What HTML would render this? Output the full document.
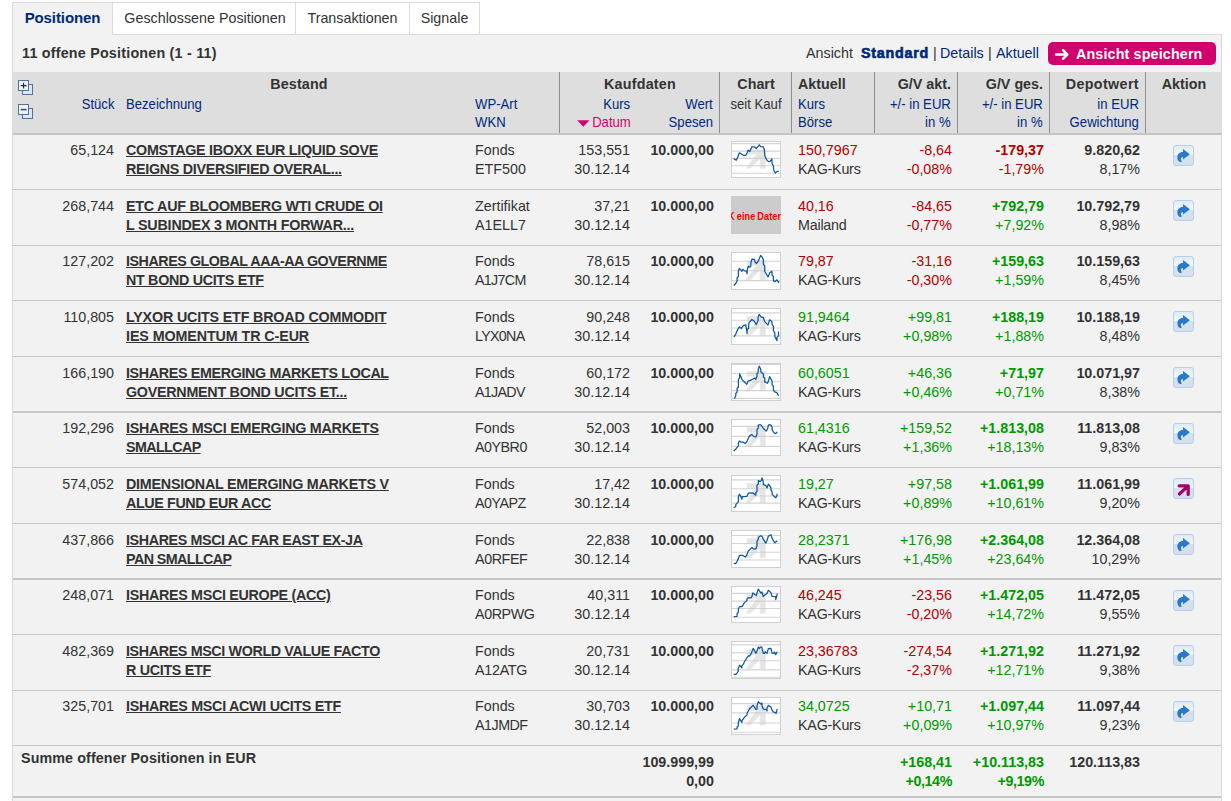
<!DOCTYPE html>
<html lang="de"><head><meta charset="utf-8"><title>Depot</title>
<style>
html,body{margin:0;padding:0;background:#fff;}
body{width:1231px;height:801px;position:relative;overflow:hidden;font-family:"Liberation Sans",Arial,sans-serif;font-size:14.3px;color:#333;}
.panel{position:absolute;left:12px;top:34px;width:1208px;height:800px;border:1px solid #dbdbdb;background:#f2f2f2;}
.tab{position:absolute;top:2px;height:31px;border:1px solid #dbdbdb;background:#fff;box-sizing:content-box;font-size:14.3px;line-height:31px;text-align:center;color:#333;white-space:nowrap;}
.tab.act{font-size:15px;letter-spacing:-0.1px;background:#f2f2f2;border-bottom:none;height:32px;line-height:29px;color:#00287a;font-weight:bold;z-index:2;}
.hd{position:absolute;left:13px;top:72px;width:1209px;height:61px;background:#dedede;border-bottom:2px solid #c4c4c6;}
.vs{position:absolute;top:72px;width:1px;height:61px;background:#8e8e8e;}
.t{position:absolute;line-height:19px;height:19px;white-space:nowrap;}
.b{font-weight:bold;}
.h{font-size:14.2px;transform:scaleX(0.925);transform-origin:0 50%;}
.h.ra{transform-origin:100% 50%;}
.h.ca{transform-origin:50% 50%;}
.std{letter-spacing:0.75px;-webkit-text-stroke:0.6px #00287a;}
.r{color:#b30000;}
.g{color:#009900;}
.l{color:#00287a;}
.m{color:#d6006e;}
a.nm{letter-spacing:-0.28px;font-weight:bold;color:#333;text-decoration:underline;}
.sep{position:absolute;left:13px;width:1208px;background:#c6c6c8;}
.ic,.ch{position:absolute;}
.kd{position:absolute;width:50px;height:38px;background:#ccc;overflow:hidden;}
.kd span{position:absolute;left:-2.6px;top:13px;line-height:14px;font-family:"Liberation Sans",sans-serif;font-weight:bold;font-size:11.5px;color:#f00;white-space:nowrap;transform:scaleX(0.80);transform-origin:0 0;letter-spacing:0.1px;word-spacing:-1px;}
.btn{box-shadow:0 0 0 1px rgba(255,255,255,0.5);position:absolute;left:1048px;top:42px;width:168px;height:23px;border-radius:5px;background:#d2006e;color:#fff;font-weight:bold;font-size:14.3px;letter-spacing:0.15px;line-height:23px;white-space:nowrap;}
.kd span::first-letter{letter-spacing:2.6px;}
</style></head>
<body>
<div class="panel"></div>
<div class="tab act" style="left:12px;width:99px">Positionen</div>
<div class="tab" style="left:112px;width:182px;text-indent:2px">Geschlossene Positionen</div>
<div class="tab" style="left:295px;width:113px">Transaktionen</div>
<div class="tab" style="left:409px;width:69px">Signale</div>
<div class="t b" style="left:22px;top:44px;letter-spacing:0.22px">11 offene Positionen (1 - 11)</div>
<div class="t" style="left:806px;top:44px">Ansicht</div>
<div class="t b l std" style="left:861px;top:44px">Standard</div>
<div class="t" style="left:933px;top:44px">|</div>
<div class="t l" style="left:940px;top:44px">Details</div>
<div class="t" style="left:988px;top:44px">|</div>
<div class="t l" style="left:996px;top:44px">Aktuell</div>
<div class="btn"><svg style="position:absolute;left:6px;top:6px" width="16" height="13" viewBox="0 0 16 13"><path d="M2 6.5 L13 6.5 M9 2.2 L13.3 6.5 L9 10.8" fill="none" stroke="#fff" stroke-width="2.5" stroke-linecap="round" stroke-linejoin="round"/></svg><span style="position:absolute;left:28px;top:1px">Ansicht speichern</span></div>
<div class="hd"></div>
<div class="vs" style="left:559px"></div><div class="vs" style="left:719px"></div><div class="vs" style="left:791px"></div><div class="vs" style="left:874px"></div><div class="vs" style="left:957px"></div><div class="vs" style="left:1049px"></div><div class="vs" style="left:1145px"></div>
<svg class="ic" style="left:18px;top:80px" width="16" height="16" viewBox="0 0 16 16"><rect x="4.5" y="4.5" width="10" height="10" fill="#dbe7f6" stroke="#53729a"/><rect x="0.5" y="0.5" width="10" height="10" fill="#eef4fc" stroke="#53729a"/><path d="M2.7 5.6 H8.5 M5.6 2.7 V8.5" stroke="#222" stroke-width="1.1" fill="none"/></svg>
<svg class="ic" style="left:18px;top:104px" width="16" height="16" viewBox="0 0 16 16"><rect x="4.5" y="4.5" width="10" height="10" fill="#dbe7f6" stroke="#53729a"/><rect x="0.5" y="0.5" width="10" height="10" fill="#eef4fc" stroke="#53729a"/><path d="M2.7 5.6 H8.5" stroke="#444" stroke-width="1.5" fill="none"/></svg>
<div class="t b" style="left:199px;width:200px;text-align:center;top:75px;letter-spacing:0.15px">Bestand</div>
<div class="t h ra l" style="right:1117px;top:95px">Stück</div>
<div class="t h l" style="left:126px;top:95px">Bezeichnung</div>
<div class="t h l" style="left:475px;top:95px">WP-Art</div>
<div class="t h l" style="left:475px;top:113px">WKN</div>
<div class="t b" style="left:540px;width:200px;text-align:center;top:75px;letter-spacing:0.22px">Kaufdaten</div>
<div class="t h ra l" style="right:601px;top:95px">Kurs</div>
<div class="t h ra m" style="right:600px;top:113px">Datum</div>
<svg class="ic" style="left:577px;top:120px" width="13" height="7" viewBox="0 0 13 7"><path d="M0.2 0.3 H12.4 L6.3 6.8 Z" fill="#d6006e"/></svg>
<div class="t h ra l" style="right:518px;top:95px">Wert</div>
<div class="t h ra l" style="right:518px;top:113px">Spesen</div>
<div class="t b" style="left:656px;width:200px;text-align:center;top:75px">Chart</div>
<div class="t h ca" style="left:656px;width:200px;text-align:center;top:95px">seit Kauf</div>
<div class="t b" style="left:798px;top:75px">Aktuell</div>
<div class="t h l" style="left:798px;top:95px">Kurs</div>
<div class="t h l" style="left:798px;top:113px">Börse</div>
<div class="t b" style="right:280px;top:75px">G/V akt.</div>
<div class="t h ra l" style="right:280px;top:95px">+/- in EUR</div>
<div class="t h ra l" style="right:280px;top:113px">in %</div>
<div class="t b" style="right:188px;top:75px">G/V ges.</div>
<div class="t h ra l" style="right:188px;top:95px">+/- in EUR</div>
<div class="t h ra l" style="right:188px;top:113px">in %</div>
<div class="t b" style="right:92px;top:75px;letter-spacing:0.38px">Depotwert</div>
<div class="t h ra l" style="right:92px;top:95px">in EUR</div>
<div class="t h ra l" style="right:92px;top:113px">Gewichtung</div>
<div class="t b" style="left:1084px;width:200px;text-align:center;top:75px">Aktion</div>
<!-- row 1 -->
<div class="t " style="top:141px;right:1117px;text-align:right;">65,124</div><div class="t " style="top:141px;left:126px;"><a class="nm" style="letter-spacing:-0.279px">COMSTAGE IBOXX EUR LIQUID SOVE</a></div><div class="t " style="top:160px;left:126px;"><a class="nm" style="letter-spacing:-0.294px">REIGNS DIVERSIFIED OVERAL...</a></div><div class="t " style="top:141px;left:475px;">Fonds</div><div class="t " style="top:160px;left:475px;"><span style="letter-spacing:0px">ETF500</span></div><div class="t " style="top:141px;right:601px;text-align:right;">153,551</div><div class="t " style="top:160px;right:601px;text-align:right;">30.12.14</div><div class="t b" style="top:141px;right:517px;text-align:right;">10.000,00</div><svg class="ch" style="left:731px;top:141px" width="50" height="37" viewBox="0 0 50 37" preserveAspectRatio="none"><rect x="0.5" y="0.5" width="49" height="36" fill="#fff" stroke="#d0d0d0"/><g fill="#e5e5e5" stroke="#ededed" stroke-width="0.8" stroke-linejoin="round"><path d="M16 8.2 H34.4 V27.2 H29 V17.6 L19.6 27.2 H14.9 L25.6 13.2 H16 Z"/></g><g stroke="#cdcdcd" stroke-opacity="0.85" stroke-width="1.1"><line x1="1" x2="49" y1="2.6" y2="2.6"/><line x1="1" x2="49" y1="10.1" y2="10.1"/><line x1="1" x2="49" y1="17.4" y2="17.4"/><line x1="1" x2="49" y1="24.8" y2="24.8"/><line x1="1" x2="49" y1="32.2" y2="32.2"/></g><polyline transform="translate(0.7,0.5)" points="2.0,17.1 4.6,18.7 6.1,15.6 7.7,11.3 9.7,12.5 11.8,13.8 14.1,13.8 15.4,11.5 16.4,8.7 18.2,10.0 19.2,7.4 20.2,5.4 22.8,5.4 24.6,6.9 26.4,4.9 27.6,3.3 28.9,5.1 31.7,5.4 32.8,9.0 33.0,13.6 34.0,16.6 35.6,19.2 37.1,20.2 38.6,19.7 40.2,17.4 40.4,22.3 41.7,24.3 42.0,28.4 43.5,31.5 45.3,29.9 47.1,29.9" fill="none" stroke="#0f57a3" stroke-width="1.25" stroke-linejoin="round" stroke-linecap="butt"/></svg><div class="t r" style="top:141px;left:798px;">150,7967</div><div class="t " style="top:160px;left:798px;"><span style="letter-spacing:-0.22px">KAG-Kurs</span></div><div class="t r" style="top:141px;right:279px;text-align:right;">-8,64</div><div class="t r" style="top:160px;right:279px;text-align:right;">-0,08%</div><div class="t r b" style="top:141px;right:187px;text-align:right;">-179,37</div><div class="t r" style="top:160px;right:187px;text-align:right;">-1,79%</div><div class="t b" style="top:141px;right:91px;text-align:right;">9.820,62</div><div class="t " style="top:160px;right:91px;text-align:right;">8,17%</div><svg class="ic" style="left:1173px;top:145px" width="21" height="21" viewBox="0 0 21 21"><defs><linearGradient id="gb145" x1="0" y1="0" x2="0" y2="1"><stop offset="0" stop-color="#dfe9f6"/><stop offset="0.45" stop-color="#f1f6fb"/><stop offset="0.46" stop-color="#d8e2ee"/><stop offset="1" stop-color="#d5e0ec"/></linearGradient></defs><rect x="0.5" y="0.5" width="20" height="20" rx="2.5" fill="url(#gb145)" stroke="#b5cfee"/><path d="M16.9 9.3 L10 4 L10 7.1 C6.2 7.1 4.2 9.6 4.3 12.6 C4.4 15 5.6 16.7 7.2 17.1 C8.4 17.3 9 16.5 8.4 15.6 C7.7 14.5 7.7 13.6 8.2 13 C8.7 12.3 9.2 12.1 10 12.1 L10 14.6 Z" fill="#2878cc"/></svg>
<!-- row 2 -->
<div class="t " style="top:197px;right:1117px;text-align:right;">268,744</div><div class="t " style="top:197px;left:126px;"><a class="nm" style="letter-spacing:-0.24px">ETC AUF BLOOMBERG WTI CRUDE OI</a></div><div class="t " style="top:216px;left:126px;"><a class="nm" style="letter-spacing:-0.204px">L SUBINDEX 3 MONTH FORWAR...</a></div><div class="t " style="top:197px;left:475px;">Zertifikat</div><div class="t " style="top:216px;left:475px;"><span style="letter-spacing:0px">A1ELL7</span></div><div class="t " style="top:197px;right:601px;text-align:right;">37,21</div><div class="t " style="top:216px;right:601px;text-align:right;">30.12.14</div><div class="t b" style="top:197px;right:517px;text-align:right;">10.000,00</div><div class="kd" style="left:731px;top:196px"><span>Keine Daten</span></div><div class="t r" style="top:197px;left:798px;">40,16</div><div class="t " style="top:216px;left:798px;"><span style="letter-spacing:-0.22px">Mailand</span></div><div class="t r" style="top:197px;right:279px;text-align:right;">-84,65</div><div class="t r" style="top:216px;right:279px;text-align:right;">-0,77%</div><div class="t g b" style="top:197px;right:187px;text-align:right;">+792,79</div><div class="t g" style="top:216px;right:187px;text-align:right;">+7,92%</div><div class="t b" style="top:197px;right:91px;text-align:right;">10.792,79</div><div class="t " style="top:216px;right:91px;text-align:right;">8,98%</div><svg class="ic" style="left:1173px;top:200px" width="21" height="21" viewBox="0 0 21 21"><defs><linearGradient id="gb200" x1="0" y1="0" x2="0" y2="1"><stop offset="0" stop-color="#dfe9f6"/><stop offset="0.45" stop-color="#f1f6fb"/><stop offset="0.46" stop-color="#d8e2ee"/><stop offset="1" stop-color="#d5e0ec"/></linearGradient></defs><rect x="0.5" y="0.5" width="20" height="20" rx="2.5" fill="url(#gb200)" stroke="#b5cfee"/><path d="M16.9 9.3 L10 4 L10 7.1 C6.2 7.1 4.2 9.6 4.3 12.6 C4.4 15 5.6 16.7 7.2 17.1 C8.4 17.3 9 16.5 8.4 15.6 C7.7 14.5 7.7 13.6 8.2 13 C8.7 12.3 9.2 12.1 10 12.1 L10 14.6 Z" fill="#2878cc"/></svg>
<!-- row 3 -->
<div class="t " style="top:252px;right:1117px;text-align:right;">127,202</div><div class="t " style="top:252px;left:126px;"><a class="nm" style="letter-spacing:-0.452px">ISHARES GLOBAL AAA-AA GOVERNME</a></div><div class="t " style="top:271px;left:126px;"><a class="nm" style="letter-spacing:-0.304px">NT BOND UCITS ETF</a></div><div class="t " style="top:252px;left:475px;">Fonds</div><div class="t " style="top:271px;left:475px;"><span style="letter-spacing:-0.7px">A1J7CM</span></div><div class="t " style="top:252px;right:601px;text-align:right;">78,615</div><div class="t " style="top:271px;right:601px;text-align:right;">30.12.14</div><div class="t b" style="top:252px;right:517px;text-align:right;">10.000,00</div><svg class="ch" style="left:731px;top:252px" width="50" height="38" viewBox="0 0 50 37" preserveAspectRatio="none"><rect x="0.5" y="0.5" width="49" height="36" fill="#fff" stroke="#d0d0d0"/><g fill="#e5e5e5" stroke="#ededed" stroke-width="0.8" stroke-linejoin="round"><path d="M16 8.2 H34.4 V27.2 H29 V17.6 L19.6 27.2 H14.9 L25.6 13.2 H16 Z"/></g><g stroke="#cdcdcd" stroke-opacity="0.85" stroke-width="1.1"><line x1="1" x2="49" y1="9.0" y2="9.0"/><line x1="1" x2="49" y1="18.2" y2="18.2"/><line x1="1" x2="49" y1="27.9" y2="27.9"/></g><polyline transform="translate(0.7,0.5)" points="2.0,32.2 4.1,30.2 5.4,27.9 5.4,24.3 6.7,23.3 6.7,18.2 7.7,15.4 10.2,18.2 11.3,16.4 12.8,17.9 14.8,18.2 15.4,20.7 15.6,16.6 16.6,13.3 17.9,14.3 18.9,13.8 19.2,10.2 20.2,6.4 22.8,6.7 23.3,9.2 24.8,10.7 26.9,7.9 28.9,2.8 30.5,4.6 31.7,6.9 31.7,11.5 33.0,13.1 33.0,18.2 34.5,20.7 36.3,23.8 38.1,19.7 40.2,18.2 40.4,22.3 41.7,23.3 41.7,27.4 43.2,28.4 45.3,26.6 46.8,29.2 47.3,28.1" fill="none" stroke="#0f57a3" stroke-width="1.25" stroke-linejoin="round" stroke-linecap="butt"/></svg><div class="t r" style="top:252px;left:798px;">79,87</div><div class="t " style="top:271px;left:798px;"><span style="letter-spacing:-0.22px">KAG-Kurs</span></div><div class="t r" style="top:252px;right:279px;text-align:right;">-31,16</div><div class="t r" style="top:271px;right:279px;text-align:right;">-0,30%</div><div class="t g b" style="top:252px;right:187px;text-align:right;">+159,63</div><div class="t g" style="top:271px;right:187px;text-align:right;">+1,59%</div><div class="t b" style="top:252px;right:91px;text-align:right;">10.159,63</div><div class="t " style="top:271px;right:91px;text-align:right;">8,45%</div><svg class="ic" style="left:1173px;top:256px" width="21" height="21" viewBox="0 0 21 21"><defs><linearGradient id="gb256" x1="0" y1="0" x2="0" y2="1"><stop offset="0" stop-color="#dfe9f6"/><stop offset="0.45" stop-color="#f1f6fb"/><stop offset="0.46" stop-color="#d8e2ee"/><stop offset="1" stop-color="#d5e0ec"/></linearGradient></defs><rect x="0.5" y="0.5" width="20" height="20" rx="2.5" fill="url(#gb256)" stroke="#b5cfee"/><path d="M16.9 9.3 L10 4 L10 7.1 C6.2 7.1 4.2 9.6 4.3 12.6 C4.4 15 5.6 16.7 7.2 17.1 C8.4 17.3 9 16.5 8.4 15.6 C7.7 14.5 7.7 13.6 8.2 13 C8.7 12.3 9.2 12.1 10 12.1 L10 14.6 Z" fill="#2878cc"/></svg>
<!-- row 4 -->
<div class="t " style="top:308px;right:1117px;text-align:right;">110,805</div><div class="t " style="top:308px;left:126px;"><a class="nm" style="letter-spacing:-0.168px">LYXOR UCITS ETF BROAD COMMODIT</a></div><div class="t " style="top:327px;left:126px;"><a class="nm" style="letter-spacing:-0.093px">IES MOMENTUM TR C-EUR</a></div><div class="t " style="top:308px;left:475px;">Fonds</div><div class="t " style="top:327px;left:475px;"><span style="letter-spacing:-0.7px">LYX0NA</span></div><div class="t " style="top:308px;right:601px;text-align:right;">90,248</div><div class="t " style="top:327px;right:601px;text-align:right;">30.12.14</div><div class="t b" style="top:308px;right:517px;text-align:right;">10.000,00</div><svg class="ch" style="left:731px;top:308px" width="50" height="37" viewBox="0 0 50 37" preserveAspectRatio="none"><rect x="0.5" y="0.5" width="49" height="36" fill="#fff" stroke="#d0d0d0"/><g fill="#e5e5e5" stroke="#ededed" stroke-width="0.8" stroke-linejoin="round"><path d="M16 8.2 H34.4 V27.2 H29 V17.6 L19.6 27.2 H14.9 L25.6 13.2 H16 Z"/></g><g stroke="#cdcdcd" stroke-opacity="0.85" stroke-width="1.1"><line x1="1" x2="49" y1="4.9" y2="4.9"/><line x1="1" x2="49" y1="12.3" y2="12.3"/><line x1="1" x2="49" y1="20.0" y2="20.0"/><line x1="1" x2="49" y1="27.9" y2="27.9"/></g><polyline transform="translate(0.7,0.5)" points="2.3,28.4 4.1,25.6 5.9,21.2 7.7,18.4 9.7,20.0 11.5,17.1 14.1,16.4 15.4,24.8 15.6,20.7 16.9,20.2 17.1,14.6 20.2,11.0 22.8,13.1 24.6,16.1 26.4,12.0 26.4,8.4 27.6,5.9 29.4,8.4 31.7,9.2 33.0,13.1 36.3,16.6 37.9,11.3 40.2,13.1 40.4,16.1 41.7,17.7 41.7,22.3 43.0,23.8 43.2,27.9 45.3,32.2 45.3,28.9 46.8,27.4 46.8,23.0" fill="none" stroke="#0f57a3" stroke-width="1.25" stroke-linejoin="round" stroke-linecap="butt"/></svg><div class="t g" style="top:308px;left:798px;">91,9464</div><div class="t " style="top:327px;left:798px;"><span style="letter-spacing:-0.22px">KAG-Kurs</span></div><div class="t g" style="top:308px;right:279px;text-align:right;">+99,81</div><div class="t g" style="top:327px;right:279px;text-align:right;">+0,98%</div><div class="t g b" style="top:308px;right:187px;text-align:right;">+188,19</div><div class="t g" style="top:327px;right:187px;text-align:right;">+1,88%</div><div class="t b" style="top:308px;right:91px;text-align:right;">10.188,19</div><div class="t " style="top:327px;right:91px;text-align:right;">8,48%</div><svg class="ic" style="left:1173px;top:311px" width="21" height="21" viewBox="0 0 21 21"><defs><linearGradient id="gb311" x1="0" y1="0" x2="0" y2="1"><stop offset="0" stop-color="#dfe9f6"/><stop offset="0.45" stop-color="#f1f6fb"/><stop offset="0.46" stop-color="#d8e2ee"/><stop offset="1" stop-color="#d5e0ec"/></linearGradient></defs><rect x="0.5" y="0.5" width="20" height="20" rx="2.5" fill="url(#gb311)" stroke="#b5cfee"/><path d="M16.9 9.3 L10 4 L10 7.1 C6.2 7.1 4.2 9.6 4.3 12.6 C4.4 15 5.6 16.7 7.2 17.1 C8.4 17.3 9 16.5 8.4 15.6 C7.7 14.5 7.7 13.6 8.2 13 C8.7 12.3 9.2 12.1 10 12.1 L10 14.6 Z" fill="#2878cc"/></svg>
<!-- row 5 -->
<div class="t " style="top:364px;right:1117px;text-align:right;">166,190</div><div class="t " style="top:364px;left:126px;"><a class="nm" style="letter-spacing:-0.35px">ISHARES EMERGING MARKETS LOCAL</a></div><div class="t " style="top:383px;left:126px;"><a class="nm" style="letter-spacing:-0.26px">GOVERNMENT BOND UCITS ET...</a></div><div class="t " style="top:364px;left:475px;">Fonds</div><div class="t " style="top:383px;left:475px;"><span style="letter-spacing:-0.7px">A1JADV</span></div><div class="t " style="top:364px;right:601px;text-align:right;">60,172</div><div class="t " style="top:383px;right:601px;text-align:right;">30.12.14</div><div class="t b" style="top:364px;right:517px;text-align:right;">10.000,00</div><svg class="ch" style="left:731px;top:363px" width="50" height="38" viewBox="0 0 50 37" preserveAspectRatio="none"><rect x="0.5" y="0.5" width="49" height="36" fill="#fff" stroke="#d0d0d0"/><g fill="#e5e5e5" stroke="#ededed" stroke-width="0.8" stroke-linejoin="round"><path d="M16 8.2 H34.4 V27.2 H29 V17.6 L19.6 27.2 H14.9 L25.6 13.2 H16 Z"/></g><g stroke="#cdcdcd" stroke-opacity="0.85" stroke-width="1.1"><line x1="1" x2="49" y1="1.3" y2="1.3"/><line x1="1" x2="49" y1="10.2" y2="10.2"/><line x1="1" x2="49" y1="18.2" y2="18.2"/><line x1="1" x2="49" y1="26.9" y2="26.9"/><line x1="1" x2="49" y1="34.5" y2="34.5"/></g><polyline transform="translate(0.7,0.5)" points="2.6,34.3 4.1,31.5 4.1,28.9 5.4,27.9 5.4,24.1 6.7,23.0 6.7,15.4 7.9,14.1 7.9,10.2 9.2,12.5 10.2,15.4 12.5,17.7 15.1,20.2 16.4,17.1 19.2,16.1 23.3,14.1 24.1,15.4 25.3,12.5 25.3,10.2 26.4,8.7 26.6,5.4 27.6,2.6 28.9,5.4 29.2,8.2 31.7,10.2 31.7,13.1 33.0,14.1 33.0,17.9 35.8,19.2 36.8,16.9 37.9,12.8 39.2,15.1 40.4,16.9 40.4,20.7 41.7,22.0 41.7,25.6 43.0,27.6 45.3,28.4 46.8,31.5" fill="none" stroke="#0f57a3" stroke-width="1.25" stroke-linejoin="round" stroke-linecap="butt"/></svg><div class="t g" style="top:364px;left:798px;">60,6051</div><div class="t " style="top:383px;left:798px;"><span style="letter-spacing:-0.22px">KAG-Kurs</span></div><div class="t g" style="top:364px;right:279px;text-align:right;">+46,36</div><div class="t g" style="top:383px;right:279px;text-align:right;">+0,46%</div><div class="t g b" style="top:364px;right:187px;text-align:right;">+71,97</div><div class="t g" style="top:383px;right:187px;text-align:right;">+0,71%</div><div class="t b" style="top:364px;right:91px;text-align:right;">10.071,97</div><div class="t " style="top:383px;right:91px;text-align:right;">8,38%</div><svg class="ic" style="left:1173px;top:367px" width="21" height="21" viewBox="0 0 21 21"><defs><linearGradient id="gb367" x1="0" y1="0" x2="0" y2="1"><stop offset="0" stop-color="#dfe9f6"/><stop offset="0.45" stop-color="#f1f6fb"/><stop offset="0.46" stop-color="#d8e2ee"/><stop offset="1" stop-color="#d5e0ec"/></linearGradient></defs><rect x="0.5" y="0.5" width="20" height="20" rx="2.5" fill="url(#gb367)" stroke="#b5cfee"/><path d="M16.9 9.3 L10 4 L10 7.1 C6.2 7.1 4.2 9.6 4.3 12.6 C4.4 15 5.6 16.7 7.2 17.1 C8.4 17.3 9 16.5 8.4 15.6 C7.7 14.5 7.7 13.6 8.2 13 C8.7 12.3 9.2 12.1 10 12.1 L10 14.6 Z" fill="#2878cc"/></svg>
<!-- row 6 -->
<div class="t " style="top:419px;right:1117px;text-align:right;">192,296</div><div class="t " style="top:419px;left:126px;"><a class="nm" style="letter-spacing:-0.237px">ISHARES MSCI EMERGING MARKETS</a></div><div class="t " style="top:438px;left:126px;"><a class="nm" style="letter-spacing:-0.603px">SMALLCAP</a></div><div class="t " style="top:419px;left:475px;">Fonds</div><div class="t " style="top:438px;left:475px;"><span style="letter-spacing:-0.5px">A0YBR0</span></div><div class="t " style="top:419px;right:601px;text-align:right;">52,003</div><div class="t " style="top:438px;right:601px;text-align:right;">30.12.14</div><div class="t b" style="top:419px;right:517px;text-align:right;">10.000,00</div><svg class="ch" style="left:731px;top:419px" width="50" height="37" viewBox="0 0 50 37" preserveAspectRatio="none"><rect x="0.5" y="0.5" width="49" height="36" fill="#fff" stroke="#d0d0d0"/><g fill="#e5e5e5" stroke="#ededed" stroke-width="0.8" stroke-linejoin="round"><path d="M16 8.2 H34.4 V27.2 H29 V17.6 L19.6 27.2 H14.9 L25.6 13.2 H16 Z"/></g><g stroke="#cdcdcd" stroke-opacity="0.85" stroke-width="1.1"><line x1="1" x2="49" y1="7.4" y2="7.4"/><line x1="1" x2="49" y1="17.4" y2="17.4"/><line x1="1" x2="49" y1="27.4" y2="27.4"/></g><polyline transform="translate(0.7,0.5)" points="2.0,31.5 4.1,29.7 5.4,27.9 6.7,26.4 6.7,23.3 7.7,21.5 9.0,22.5 11.3,22.5 13.6,24.1 15.1,22.3 16.6,18.7 17.9,16.4 20.2,15.1 22.3,17.1 24.1,17.4 25.3,14.6 25.3,10.2 26.6,8.4 26.6,5.4 29.2,5.4 31.7,9.0 34.5,11.5 35.8,9.5 36.8,5.4 39.2,5.4 40.4,7.7 40.4,10.2 41.7,12.3 43.2,14.1 44.5,13.6 45.5,12.3" fill="none" stroke="#0f57a3" stroke-width="1.25" stroke-linejoin="round" stroke-linecap="butt"/></svg><div class="t g" style="top:419px;left:798px;">61,4316</div><div class="t " style="top:438px;left:798px;"><span style="letter-spacing:-0.22px">KAG-Kurs</span></div><div class="t g" style="top:419px;right:279px;text-align:right;">+159,52</div><div class="t g" style="top:438px;right:279px;text-align:right;">+1,36%</div><div class="t g b" style="top:419px;right:187px;text-align:right;">+1.813,08</div><div class="t g" style="top:438px;right:187px;text-align:right;">+18,13%</div><div class="t b" style="top:419px;right:91px;text-align:right;">11.813,08</div><div class="t " style="top:438px;right:91px;text-align:right;">9,83%</div><svg class="ic" style="left:1173px;top:423px" width="21" height="21" viewBox="0 0 21 21"><defs><linearGradient id="gb423" x1="0" y1="0" x2="0" y2="1"><stop offset="0" stop-color="#dfe9f6"/><stop offset="0.45" stop-color="#f1f6fb"/><stop offset="0.46" stop-color="#d8e2ee"/><stop offset="1" stop-color="#d5e0ec"/></linearGradient></defs><rect x="0.5" y="0.5" width="20" height="20" rx="2.5" fill="url(#gb423)" stroke="#b5cfee"/><path d="M16.9 9.3 L10 4 L10 7.1 C6.2 7.1 4.2 9.6 4.3 12.6 C4.4 15 5.6 16.7 7.2 17.1 C8.4 17.3 9 16.5 8.4 15.6 C7.7 14.5 7.7 13.6 8.2 13 C8.7 12.3 9.2 12.1 10 12.1 L10 14.6 Z" fill="#2878cc"/></svg>
<!-- row 7 -->
<div class="t " style="top:475px;right:1117px;text-align:right;">574,052</div><div class="t " style="top:475px;left:126px;"><a class="nm" style="letter-spacing:-0.231px">DIMENSIONAL EMERGING MARKETS V</a></div><div class="t " style="top:494px;left:126px;"><a class="nm" style="letter-spacing:-0.373px">ALUE FUND EUR ACC</a></div><div class="t " style="top:475px;left:475px;">Fonds</div><div class="t " style="top:494px;left:475px;"><span style="letter-spacing:-0.5px">A0YAPZ</span></div><div class="t " style="top:475px;right:601px;text-align:right;">17,42</div><div class="t " style="top:494px;right:601px;text-align:right;">30.12.14</div><div class="t b" style="top:475px;right:517px;text-align:right;">10.000,00</div><svg class="ch" style="left:731px;top:475px" width="50" height="37" viewBox="0 0 50 37" preserveAspectRatio="none"><rect x="0.5" y="0.5" width="49" height="36" fill="#fff" stroke="#d0d0d0"/><g fill="#e5e5e5" stroke="#ededed" stroke-width="0.8" stroke-linejoin="round"><path d="M16 8.2 H34.4 V27.2 H29 V17.6 L19.6 27.2 H14.9 L25.6 13.2 H16 Z"/></g><g stroke="#cdcdcd" stroke-opacity="0.85" stroke-width="1.1"><line x1="1" x2="49" y1="4.9" y2="4.9"/><line x1="1" x2="49" y1="13.8" y2="13.8"/><line x1="1" x2="49" y1="21.0" y2="21.0"/><line x1="1" x2="49" y1="28.1" y2="28.1"/></g><polyline transform="translate(0.7,0.5)" points="2.0,32.2 4.1,31.0 4.1,29.2 5.4,27.6 6.7,26.1 6.7,21.2 7.7,18.7 9.0,20.7 10.2,23.8 10.5,21.2 15.1,21.0 16.6,17.7 21.2,17.4 24.1,19.7 24.1,16.9 25.3,15.9 25.3,9.7 26.6,8.4 26.6,5.1 28.4,6.1 29.9,4.9 30.2,2.3 31.5,5.9 31.7,9.2 34.3,10.2 35.3,12.5 36.6,8.7 39.2,12.0 39.2,14.6 40.4,16.4 40.4,18.9 44.0,22.3 45.3,20.2 45.3,18.2" fill="none" stroke="#0f57a3" stroke-width="1.25" stroke-linejoin="round" stroke-linecap="butt"/></svg><div class="t g" style="top:475px;left:798px;">19,27</div><div class="t " style="top:494px;left:798px;"><span style="letter-spacing:-0.22px">KAG-Kurs</span></div><div class="t g" style="top:475px;right:279px;text-align:right;">+97,58</div><div class="t g" style="top:494px;right:279px;text-align:right;">+0,89%</div><div class="t g b" style="top:475px;right:187px;text-align:right;">+1.061,99</div><div class="t g" style="top:494px;right:187px;text-align:right;">+10,61%</div><div class="t b" style="top:475px;right:91px;text-align:right;">11.061,99</div><div class="t " style="top:494px;right:91px;text-align:right;">9,20%</div><svg class="ic" style="left:1173px;top:478px" width="21" height="21" viewBox="0 0 21 21"><defs><linearGradient id="gm478" x1="0" y1="0" x2="0" y2="1"><stop offset="0" stop-color="#dfe9f6"/><stop offset="0.45" stop-color="#f1f6fb"/><stop offset="0.46" stop-color="#d8e2ee"/><stop offset="1" stop-color="#d5e0ec"/></linearGradient></defs><rect x="0.5" y="0.5" width="20" height="20" rx="2.5" fill="url(#gm478)" stroke="#b5cfee"/><path d="M6.2 7.8 L15.2 7.8 L15.2 16.4 M14.6 8.4 L6.4 16" fill="none" stroke="#a4006c" stroke-width="3.2" stroke-linecap="round" stroke-linejoin="round"/></svg>
<!-- row 8 -->
<div class="t " style="top:531px;right:1117px;text-align:right;">437,866</div><div class="t " style="top:531px;left:126px;"><a class="nm" style="letter-spacing:-0.383px">ISHARES MSCI AC FAR EAST EX-JA</a></div><div class="t " style="top:550px;left:126px;"><a class="nm" style="letter-spacing:-0.585px">PAN SMALLCAP</a></div><div class="t " style="top:531px;left:475px;">Fonds</div><div class="t " style="top:550px;left:475px;"><span style="letter-spacing:-0.4px">A0RFEF</span></div><div class="t " style="top:531px;right:601px;text-align:right;">22,838</div><div class="t " style="top:550px;right:601px;text-align:right;">30.12.14</div><div class="t b" style="top:531px;right:517px;text-align:right;">10.000,00</div><svg class="ch" style="left:731px;top:530px" width="50" height="38" viewBox="0 0 50 37" preserveAspectRatio="none"><rect x="0.5" y="0.5" width="49" height="36" fill="#fff" stroke="#d0d0d0"/><g fill="#e5e5e5" stroke="#ededed" stroke-width="0.8" stroke-linejoin="round"><path d="M16 8.2 H34.4 V27.2 H29 V17.6 L19.6 27.2 H14.9 L25.6 13.2 H16 Z"/></g><g stroke="#cdcdcd" stroke-opacity="0.85" stroke-width="1.1"><line x1="1" x2="49" y1="5.4" y2="5.4"/><line x1="1" x2="49" y1="13.1" y2="13.1"/><line x1="1" x2="49" y1="21.7" y2="21.7"/><line x1="1" x2="49" y1="29.2" y2="29.2"/></g><polyline transform="translate(0.7,0.5)" points="2.0,32.0 4.1,32.2 5.4,29.9 6.7,27.4 7.7,24.3 11.3,24.3 13.6,25.8 15.1,24.1 16.4,20.2 20.2,16.4 21.5,17.9 24.1,17.9 25.3,15.1 25.3,10.5 26.6,8.4 26.6,6.7 29.2,5.1 30.5,5.9 31.7,8.7 34.0,12.3 35.3,9.7 36.6,5.6 39.2,4.1 40.4,7.4 41.7,10.0 43.2,12.0 45.5,10.0" fill="none" stroke="#0f57a3" stroke-width="1.25" stroke-linejoin="round" stroke-linecap="butt"/></svg><div class="t g" style="top:531px;left:798px;">28,2371</div><div class="t " style="top:550px;left:798px;"><span style="letter-spacing:-0.22px">KAG-Kurs</span></div><div class="t g" style="top:531px;right:279px;text-align:right;">+176,98</div><div class="t g" style="top:550px;right:279px;text-align:right;">+1,45%</div><div class="t g b" style="top:531px;right:187px;text-align:right;">+2.364,08</div><div class="t g" style="top:550px;right:187px;text-align:right;">+23,64%</div><div class="t b" style="top:531px;right:91px;text-align:right;">12.364,08</div><div class="t " style="top:550px;right:91px;text-align:right;">10,29%</div><svg class="ic" style="left:1173px;top:534px" width="21" height="21" viewBox="0 0 21 21"><defs><linearGradient id="gb534" x1="0" y1="0" x2="0" y2="1"><stop offset="0" stop-color="#dfe9f6"/><stop offset="0.45" stop-color="#f1f6fb"/><stop offset="0.46" stop-color="#d8e2ee"/><stop offset="1" stop-color="#d5e0ec"/></linearGradient></defs><rect x="0.5" y="0.5" width="20" height="20" rx="2.5" fill="url(#gb534)" stroke="#b5cfee"/><path d="M16.9 9.3 L10 4 L10 7.1 C6.2 7.1 4.2 9.6 4.3 12.6 C4.4 15 5.6 16.7 7.2 17.1 C8.4 17.3 9 16.5 8.4 15.6 C7.7 14.5 7.7 13.6 8.2 13 C8.7 12.3 9.2 12.1 10 12.1 L10 14.6 Z" fill="#2878cc"/></svg>
<!-- row 9 -->
<div class="t " style="top:586px;right:1117px;text-align:right;">248,071</div><div class="t " style="top:586px;left:126px;"><a class="nm" style="letter-spacing:-0.304px">ISHARES MSCI EUROPE (ACC)</a></div><div class="t " style="top:586px;left:475px;">Fonds</div><div class="t " style="top:605px;left:475px;"><span style="letter-spacing:-0.4px">A0RPWG</span></div><div class="t " style="top:586px;right:601px;text-align:right;">40,311</div><div class="t " style="top:605px;right:601px;text-align:right;">30.12.14</div><div class="t b" style="top:586px;right:517px;text-align:right;">10.000,00</div><svg class="ch" style="left:731px;top:586px" width="50" height="37" viewBox="0 0 50 37" preserveAspectRatio="none"><rect x="0.5" y="0.5" width="49" height="36" fill="#fff" stroke="#d0d0d0"/><g fill="#e5e5e5" stroke="#ededed" stroke-width="0.8" stroke-linejoin="round"><path d="M16 8.2 H34.4 V27.2 H29 V17.6 L19.6 27.2 H14.9 L25.6 13.2 H16 Z"/></g><g stroke="#cdcdcd" stroke-opacity="0.85" stroke-width="1.1"><line x1="1" x2="49" y1="7.4" y2="7.4"/><line x1="1" x2="49" y1="15.1" y2="15.1"/><line x1="1" x2="49" y1="22.5" y2="22.5"/><line x1="1" x2="49" y1="31.2" y2="31.2"/></g><polyline transform="translate(0.7,0.5)" points="2.0,30.2 5.4,29.9 5.4,26.9 6.7,25.8 6.7,22.3 7.9,20.0 10.2,20.0 11.5,18.4 12.5,16.4 15.1,14.1 15.4,12.3 16.6,11.3 19.2,11.3 20.2,10.0 21.2,6.4 22.8,7.7 24.6,9.0 25.3,6.4 26.6,2.6 27.9,4.6 29.2,6.7 30.2,5.4 31.5,10.0 33.0,8.4 35.3,6.9 36.6,3.8 39.2,6.1 40.4,10.0 44.0,10.2 44.0,13.1 45.3,8.7 45.3,7.2" fill="none" stroke="#0f57a3" stroke-width="1.25" stroke-linejoin="round" stroke-linecap="butt"/></svg><div class="t r" style="top:586px;left:798px;">46,245</div><div class="t " style="top:605px;left:798px;"><span style="letter-spacing:-0.22px">KAG-Kurs</span></div><div class="t r" style="top:586px;right:279px;text-align:right;">-23,56</div><div class="t r" style="top:605px;right:279px;text-align:right;">-0,20%</div><div class="t g b" style="top:586px;right:187px;text-align:right;">+1.472,05</div><div class="t g" style="top:605px;right:187px;text-align:right;">+14,72%</div><div class="t b" style="top:586px;right:91px;text-align:right;">11.472,05</div><div class="t " style="top:605px;right:91px;text-align:right;">9,55%</div><svg class="ic" style="left:1173px;top:590px" width="21" height="21" viewBox="0 0 21 21"><defs><linearGradient id="gb590" x1="0" y1="0" x2="0" y2="1"><stop offset="0" stop-color="#dfe9f6"/><stop offset="0.45" stop-color="#f1f6fb"/><stop offset="0.46" stop-color="#d8e2ee"/><stop offset="1" stop-color="#d5e0ec"/></linearGradient></defs><rect x="0.5" y="0.5" width="20" height="20" rx="2.5" fill="url(#gb590)" stroke="#b5cfee"/><path d="M16.9 9.3 L10 4 L10 7.1 C6.2 7.1 4.2 9.6 4.3 12.6 C4.4 15 5.6 16.7 7.2 17.1 C8.4 17.3 9 16.5 8.4 15.6 C7.7 14.5 7.7 13.6 8.2 13 C8.7 12.3 9.2 12.1 10 12.1 L10 14.6 Z" fill="#2878cc"/></svg>
<!-- row 10 -->
<div class="t " style="top:642px;right:1117px;text-align:right;">482,369</div><div class="t " style="top:642px;left:126px;"><a class="nm" style="letter-spacing:-0.361px">ISHARES MSCI WORLD VALUE FACTO</a></div><div class="t " style="top:661px;left:126px;"><a class="nm" style="letter-spacing:-0.297px">R UCITS ETF</a></div><div class="t " style="top:642px;left:475px;">Fonds</div><div class="t " style="top:661px;left:475px;"><span style="letter-spacing:-0.26px">A12ATG</span></div><div class="t " style="top:642px;right:601px;text-align:right;">20,731</div><div class="t " style="top:661px;right:601px;text-align:right;">30.12.14</div><div class="t b" style="top:642px;right:517px;text-align:right;">10.000,00</div><svg class="ch" style="left:731px;top:641px" width="50" height="38" viewBox="0 0 50 37" preserveAspectRatio="none"><rect x="0.5" y="0.5" width="49" height="36" fill="#fff" stroke="#d0d0d0"/><g fill="#e5e5e5" stroke="#ededed" stroke-width="0.8" stroke-linejoin="round"><path d="M16 8.2 H34.4 V27.2 H29 V17.6 L19.6 27.2 H14.9 L25.6 13.2 H16 Z"/></g><g stroke="#cdcdcd" stroke-opacity="0.85" stroke-width="1.1"><line x1="1" x2="49" y1="3.8" y2="3.8"/><line x1="1" x2="49" y1="11.5" y2="11.5"/><line x1="1" x2="49" y1="19.2" y2="19.2"/><line x1="1" x2="49" y1="28.1" y2="28.1"/><line x1="1" x2="49" y1="35.3" y2="35.3"/></g><polyline transform="translate(0.7,0.5)" points="2.0,32.0 4.1,32.0 5.4,30.5 6.7,28.9 6.4,26.9 7.9,23.0 10.2,25.6 10.0,23.8 11.5,22.3 12.8,19.7 14.1,17.7 15.4,15.6 16.6,14.1 17.9,14.1 19.2,12.3 20.5,9.2 21.5,6.7 22.8,8.7 24.1,11.5 25.3,9.2 26.6,5.4 27.9,6.9 28.4,5.4 30.2,5.4 30.5,7.9 31.7,11.5 33.0,11.5 33.5,10.0 35.3,11.5 36.6,6.9 39.2,6.7 40.4,11.3 42.2,11.5 42.7,10.2 44.0,12.8 45.5,10.0" fill="none" stroke="#0f57a3" stroke-width="1.25" stroke-linejoin="round" stroke-linecap="butt"/></svg><div class="t r" style="top:642px;left:798px;">23,36783</div><div class="t " style="top:661px;left:798px;"><span style="letter-spacing:-0.22px">KAG-Kurs</span></div><div class="t r" style="top:642px;right:279px;text-align:right;">-274,54</div><div class="t r" style="top:661px;right:279px;text-align:right;">-2,37%</div><div class="t g b" style="top:642px;right:187px;text-align:right;">+1.271,92</div><div class="t g" style="top:661px;right:187px;text-align:right;">+12,71%</div><div class="t b" style="top:642px;right:91px;text-align:right;">11.271,92</div><div class="t " style="top:661px;right:91px;text-align:right;">9,38%</div><svg class="ic" style="left:1173px;top:645px" width="21" height="21" viewBox="0 0 21 21"><defs><linearGradient id="gb645" x1="0" y1="0" x2="0" y2="1"><stop offset="0" stop-color="#dfe9f6"/><stop offset="0.45" stop-color="#f1f6fb"/><stop offset="0.46" stop-color="#d8e2ee"/><stop offset="1" stop-color="#d5e0ec"/></linearGradient></defs><rect x="0.5" y="0.5" width="20" height="20" rx="2.5" fill="url(#gb645)" stroke="#b5cfee"/><path d="M16.9 9.3 L10 4 L10 7.1 C6.2 7.1 4.2 9.6 4.3 12.6 C4.4 15 5.6 16.7 7.2 17.1 C8.4 17.3 9 16.5 8.4 15.6 C7.7 14.5 7.7 13.6 8.2 13 C8.7 12.3 9.2 12.1 10 12.1 L10 14.6 Z" fill="#2878cc"/></svg>
<!-- row 11 -->
<div class="t " style="top:697px;right:1117px;text-align:right;">325,701</div><div class="t " style="top:697px;left:126px;"><a class="nm" style="letter-spacing:-0.287px">ISHARES MSCI ACWI UCITS ETF</a></div><div class="t " style="top:697px;left:475px;">Fonds</div><div class="t " style="top:716px;left:475px;"><span style="letter-spacing:-0.5px">A1JMDF</span></div><div class="t " style="top:697px;right:601px;text-align:right;">30,703</div><div class="t " style="top:716px;right:601px;text-align:right;">30.12.14</div><div class="t b" style="top:697px;right:517px;text-align:right;">10.000,00</div><svg class="ch" style="left:731px;top:697px" width="50" height="38" viewBox="0 0 50 37" preserveAspectRatio="none"><rect x="0.5" y="0.5" width="49" height="36" fill="#fff" stroke="#d0d0d0"/><g fill="#e5e5e5" stroke="#ededed" stroke-width="0.8" stroke-linejoin="round"><path d="M16 8.2 H34.4 V27.2 H29 V17.6 L19.6 27.2 H14.9 L25.6 13.2 H16 Z"/></g><g stroke="#cdcdcd" stroke-opacity="0.85" stroke-width="1.1"><line x1="1" x2="49" y1="6.4" y2="6.4"/><line x1="1" x2="49" y1="15.4" y2="15.4"/><line x1="1" x2="49" y1="25.3" y2="25.3"/><line x1="1" x2="49" y1="34.3" y2="34.3"/></g><polyline transform="translate(0.7,0.5)" points="2.0,30.7 5.4,30.5 5.4,28.7 6.7,27.6 6.7,24.3 7.7,20.5 10.2,24.3 10.2,22.5 11.5,21.0 12.8,19.2 15.4,16.9 15.4,15.1 16.6,13.1 17.9,11.0 21.5,7.4 22.8,9.5 24.1,11.5 25.3,11.3 25.3,7.9 26.6,4.1 29.2,6.4 30.2,5.4 30.5,9.0 31.7,11.3 34.3,11.5 35.3,13.1 35.3,10.2 36.6,7.7 39.2,9.2 40.4,12.5 41.7,14.1 44.0,14.8 44.3,15.6 45.3,12.5 45.3,11.3" fill="none" stroke="#0f57a3" stroke-width="1.25" stroke-linejoin="round" stroke-linecap="butt"/></svg><div class="t g" style="top:697px;left:798px;">34,0725</div><div class="t " style="top:716px;left:798px;"><span style="letter-spacing:-0.22px">KAG-Kurs</span></div><div class="t g" style="top:697px;right:279px;text-align:right;">+10,71</div><div class="t g" style="top:716px;right:279px;text-align:right;">+0,09%</div><div class="t g b" style="top:697px;right:187px;text-align:right;">+1.097,44</div><div class="t g" style="top:716px;right:187px;text-align:right;">+10,97%</div><div class="t b" style="top:697px;right:91px;text-align:right;">11.097,44</div><div class="t " style="top:716px;right:91px;text-align:right;">9,23%</div><svg class="ic" style="left:1173px;top:701px" width="21" height="21" viewBox="0 0 21 21"><defs><linearGradient id="gb701" x1="0" y1="0" x2="0" y2="1"><stop offset="0" stop-color="#dfe9f6"/><stop offset="0.45" stop-color="#f1f6fb"/><stop offset="0.46" stop-color="#d8e2ee"/><stop offset="1" stop-color="#d5e0ec"/></linearGradient></defs><rect x="0.5" y="0.5" width="20" height="20" rx="2.5" fill="url(#gb701)" stroke="#b5cfee"/><path d="M16.9 9.3 L10 4 L10 7.1 C6.2 7.1 4.2 9.6 4.3 12.6 C4.4 15 5.6 16.7 7.2 17.1 C8.4 17.3 9 16.5 8.4 15.6 C7.7 14.5 7.7 13.6 8.2 13 C8.7 12.3 9.2 12.1 10 12.1 L10 14.6 Z" fill="#2878cc"/></svg>
<div class="sep" style="top:189px;height:1px"></div><div class="sep" style="top:245px;height:1px"></div><div class="sep" style="top:300px;height:1px"></div><div class="sep" style="top:356px;height:1px"></div><div class="sep" style="top:411px;height:2px"></div><div class="sep" style="top:467px;height:1px"></div><div class="sep" style="top:523px;height:1px"></div><div class="sep" style="top:578px;height:2px"></div><div class="sep" style="top:634px;height:1px"></div><div class="sep" style="top:690px;height:1px"></div><div class="sep" style="top:745px;height:1px"></div><div class="sep" style="top:796px;height:2px"></div>
<!-- sum -->
<div class="t b" style="top:749px;left:21px;"><span style="letter-spacing:0.1px">Summe offener Positionen in EUR</span></div><div class="t b" style="top:753px;right:517px;text-align:right;">109.999,99</div><div class="t b" style="top:772px;right:517px;text-align:right;">0,00</div><div class="t g b" style="top:753px;right:279px;text-align:right;">+168,41</div><div class="t g b" style="top:772px;right:279px;text-align:right;"><span style="letter-spacing:-0.4px">+0,14%</span></div><div class="t g b" style="top:753px;right:187px;text-align:right;">+10.113,83</div><div class="t g b" style="top:772px;right:187px;text-align:right;"><span style="letter-spacing:-0.4px">+9,19%</span></div><div class="t b" style="top:753px;right:91px;text-align:right;">120.113,83</div>
</body></html>
